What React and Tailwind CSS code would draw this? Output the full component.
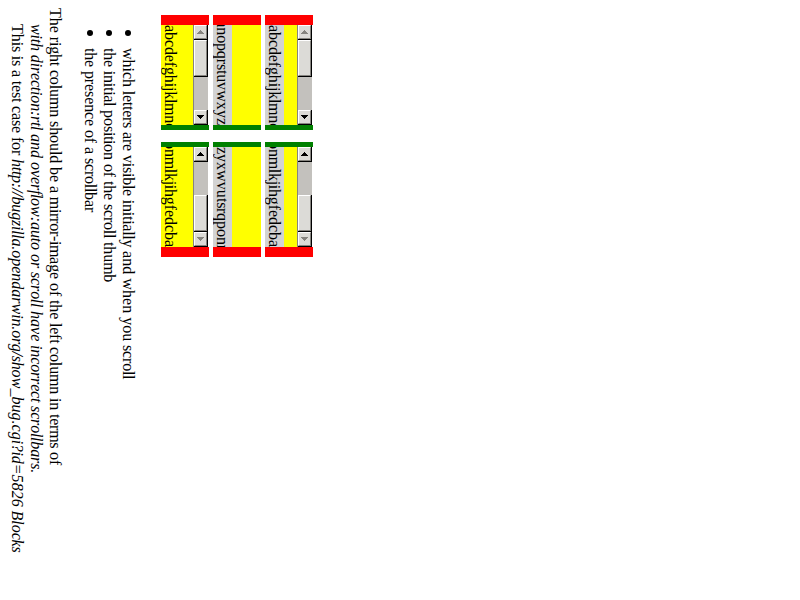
const GLYPHS = 'abcdefghijklmnopqrstuvwxyz';
const REVERSED = 'zyxwvutsrqponmlkjihgfedcba';

// Glyph advances at 16px; every glyph that is not listed is 8px wide.
const ROMAN = { i: 4.445, j: 4.445, l: 4.445, t: 4.445, a: 7.1, c: 7.1, e: 7.1, z: 7.1, f: 5.33, r: 5.33, s: 6.227, m: 12.45, w: 11.555, T: 9.773, '-': 5.33, ' ': 4, '.': 4 };
const ITALIC = { i: 4.445, j: 4.445, l: 4.445, t: 4.445, f: 4.445, '/': 4.445, c: 7.1, e: 7.1, k: 7.1, v: 7.1, x: 7.1, y: 7.1, r: 6.227, s: 6.227, z: 6.227, m: 11.555, w: 10.67, ':': 5.33, '=': 10.8, B: 9.773, ' ': 4, '.': 4 };

// Sets the text on whole-pixel advances, a few letters at a time.
function Text({ children, italic = false }) {
  const widths = italic ? ITALIC : ROMAN;
  const pieces = children.match(/ ?[^ ]{1,3}| /g);
  return (
    <span className={italic ? 'italic' : ''}>
      {pieces.map((piece, i) => {
        const excess = [...piece].reduce((sum, c) => {
          const w = widths[c] ?? 8;
          return sum + Math.round(w) - w;
        }, 0);
        return <span key={i} style={{ letterSpacing: `${excess / piece.length}px` }}>{piece}</span>;
      })}
    </span>
  );
}

function Button({ dir, disabled }) {
  return (
    <div className="h-[15px] w-[14px] shrink-0 border-r border-b border-black bg-[#dcdbd7]">
      <div className="flex h-[14px] w-[13px] items-center justify-center border border-t-white border-l-white border-r-[#86847f] border-b-[#86847f]">
        <svg width="7" height="4" viewBox="0 0 7 4" shapeRendering="crispEdges">
          <path d={dir === 'up' ? 'M3 0h1v1h1v1h1v1h1v1H0V3h1V2h1V1h1z' : 'M0 0h7v1H6v1H5v1H4v1H3V3H2V2H1V1H0z'} fill={disabled ? '#86847f' : '#000'} />
        </svg>
      </div>
    </div>
  );
}

function Scrollbar({ atEnd }) {
  return (
    <div className="flex h-[100px] w-4 shrink-0 flex-col border-r border-l border-r-white border-l-[#86847f] bg-[#c3c1bd]">
      <Button dir="up" disabled={!atEnd} />
      {atEnd && <div className="h-[33px] shrink-0" />}
      <div className="h-[37px] w-[14px] shrink-0 border-r border-b border-black bg-[#dcdbd7]">
        <div className="h-full border border-t-white border-l-white border-r-[#86847f] border-b-[#86847f]" />
      </div>
      {!atEnd && <div className="h-[33px] shrink-0" />}
      <Button dir="down" disabled={atEnd} />
    </div>
  );
}

function Box({ text, end, gray, scrollbar, mirrored }) {
  return (
    <div className={`w-12 border-[red] ${mirrored ? 'border-t-[5px] border-b-[10px] border-t-[green]' : 'border-t-[10px] border-b-[5px] border-b-[green]'}`}>
      <div className="flex h-[100px] bg-[yellow]">
        <div className={`h-[100px] w-[19px] shrink-0 overflow-hidden ${gray ? 'bg-[lightgray]' : ''}`}>
          <div className={`ml-[19px] flex h-5 w-[100px] origin-top-left rotate-90 leading-5 whitespace-nowrap ${end ? 'justify-end' : 'justify-start'}`}>
            <div className="shrink-0"><Text>{text}</Text></div>
          </div>
        </div>
        <div className="grow" />
        {scrollbar && <Scrollbar atEnd={mirrored} />}
      </div>
    </div>
  );
}

function Line({ children, className = '' }) {
  return (
    <div className={`w-[19px] shrink-0 ${className}`}>
      <div className="ml-[19px] h-5 w-max origin-top-left rotate-90 leading-5 whitespace-pre">{children}</div>
    </div>
  );
}

function Item({ children }) {
  return (
    <div className="flex w-[19px] flex-col">
      <div className="mt-[30px] mb-[12px] ml-[6px] h-[6px] w-[6px] rounded-full bg-black" />
      <Line><Text>{children}</Text></Line>
    </div>
  );
}

export default function App() {
  return (
    <div className="flex h-[600px] w-[800px] items-start overflow-hidden bg-white pl-2 font-['Liberation_Serif',serif] text-[16px] text-black">
      <Line className="pt-6">
        <Text>{'This is a test case for '}</Text>
        <Text italic>http://bugzilla.opendarwin.org/show_bug.cgi?id=5826 Blocks</Text>
      </Line>
      <Line className="pt-6"><Text italic>with direction:rtl and overflow:auto or scroll have incorrect scrollbars.</Text></Line>
      <Line className="pt-2"><Text>The right column should be a mirror-image of the left column in terms of</Text></Line>
      <div className="ml-4 flex">
        <Item>the presence of a scrollbar</Item>
        <Item>the initial position of the scroll thumb</Item>
        <Item>which letters are visible initially and when you scroll</Item>
      </div>
      <div className="ml-[23px] grid grid-cols-[48px_48px_48px] gap-x-1 gap-y-3 pt-[15px]">
        <Box text={GLYPHS} scrollbar />
        <Box text={GLYPHS} end gray />
        <Box text={GLYPHS} gray scrollbar />
        <Box text={REVERSED} end scrollbar mirrored />
        <Box text={REVERSED} gray mirrored />
        <Box text={REVERSED} end gray scrollbar mirrored />
      </div>
    </div>
  );
}
